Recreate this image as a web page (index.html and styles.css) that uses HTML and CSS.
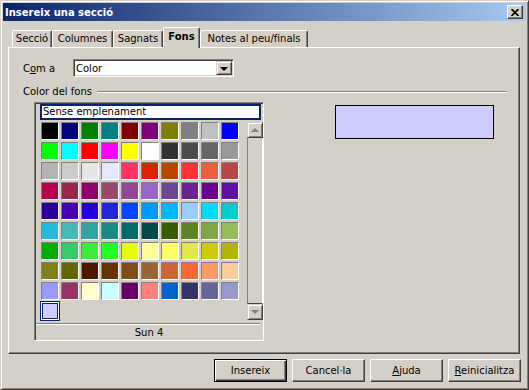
FILE: index.html
```html
<!doctype html>
<html lang="ca">
  <head>
    <meta charset="UTF-8" />
    <meta name="viewport" content="width=device-width, initial-scale=1.0" />
    <title>Insereix una secció</title>
    <link rel="stylesheet" href="styles.css">
  </head>
  <body>
    <div class="window">
        <div class="titlebar">
            <span class="title">Insereix una secció</span>
            <button type="button" class="close" aria-label="Tanca">
                <svg width="8" height="7" viewBox="0 0 8 7">
                    <path d="M0.5 0 L7.5 7 M7.5 0 L0.5 7" stroke="#000" stroke-width="1.7" fill="none" />
                </svg>
            </button>
        </div>

        <div class="dialog">
            <ul class="tabs">
                <li class="tab tab-seccio">Secció</li>
                <li class="tab tab-columnes">Columnes</li>
                <li class="tab tab-sagnats">Sagnats</li>
                <li class="tab tab-fons active">Fons</li>
                <li class="tab tab-notes">Notes al peu/finals</li>
            </ul>

            <section class="panel">
                <div class="type-row">
                    <label class="type-label" for="type">C<u>o</u>m a</label>
                    <div class="combo" id="type">
                        <span class="combo-value">Color</span>
                        <span class="combo-btn"><span class="arrow-down"></span></span>
                    </div>
                </div>

                <div class="group-title">
                    <span>Color del fons</span>
                    <span class="rule"></span>
                </div>

                <div class="group">
                    <div class="palette">
                        <div class="none-item">Sense emplenament</div>
                        <div class="palette-body">
                            <div class="swatches" id="swatches"></div>
                            <div class="scrollbar">
                                <span class="sb-btn"><span class="sb-arrow up"></span></span>
                                <span class="sb-track"></span>
                                <span class="sb-btn"><span class="sb-arrow down"></span></span>
                            </div>
                        </div>
                        <div class="palette-sep"></div>
                        <div class="palette-name">Sun 4</div>
                    </div>
                    <div class="preview"></div>
                </div>
            </section>

            <div class="buttons">
                <button type="button" class="btn default">Insereix</button>
                <button type="button" class="btn">Cancel·la</button>
                <button type="button" class="btn"><u>A</u>juda</button>
                <button type="button" class="btn"><u>R</u>einicialitza</button>
            </div>
        </div>
    </div>

    <script>
        // Sun palette, row by row (10 per row), last one is selected
        const colors = [
            '#000000', '#000080', '#008000', '#008080', '#800000', '#800080', '#808000', '#808080', '#c0c0c0', '#0000ff',
            '#00ff00', '#00ffff', '#ff0000', '#ff00ff', '#ffff00', '#ffffff', '#333333', '#4c4c4c', '#666666', '#999999',
            '#b3b3b3', '#cccccc', '#e6e6e6', '#e6e6ff', '#ff3366', '#dc2300', '#b84700', '#ff3333', '#eb613d', '#b84747',
            '#b8004d', '#99284c', '#94006b', '#994a6b', '#944794', '#9966cc', '#6b4794', '#6b2394', '#6b0094', '#5e11a6',
            '#280099', '#4700b8', '#2300dc', '#2323dc', '#0047ff', '#0099ff', '#00b8ff', '#99ccff', '#00dcff', '#00cccc',
            '#23b8dc', '#47b8b8', '#33a3a3', '#198a8a', '#006b6b', '#004a4a', '#355e00', '#5c8526', '#7da647', '#94bd5e',
            '#00ae00', '#33cc66', '#3deb3d', '#23ff23', '#e6ff00', '#ffff99', '#ffff66', '#e6e64c', '#cccc00', '#b3b300',
            '#808019', '#666600', '#4c1900', '#663300', '#804c19', '#996633', '#cc6633', '#ff6633', '#ff9966', '#ffcc99',
            '#9999ff', '#993366', '#ffffcc', '#ccffff', '#660066', '#ff8080', '#0066cc', '#333366', '#666699', '#9999cc',
            '#ccccff'
        ];

        const swatches = document.getElementById( 'swatches' );

        colors.forEach( ( color, index ) => {
            const swatch = document.createElement( 'span' );
            swatch.className = 'swatch';
            swatch.style.backgroundColor = color;

            if ( index === colors.length - 1 ) {
                swatch.classList.add( 'selected' );
            }

            swatches.append( swatch );
        } );
    </script>
  </body>
</html>
```

FILE: styles.css
```css
* {
    box-sizing: border-box;
    margin: 0;
    padding: 0;
}

body {
    background-color: #d4d0c8;
    font-family: "DejaVu Sans", Tahoma, sans-serif;
    font-size: 10px;
    color: #000;
}

button {
    font: inherit;
    color: inherit;
}

u {
    text-underline-offset: 1px;
}

.window {
    width: 529px;
    height: 390px;
    padding: 2px;
    background-color: #d4d0c8;
    border: 1px solid;
    border-color: #d4d0c8 #404040 #404040 #d4d0c8;
    box-shadow: inset 1px 1px #fff, inset -1px -1px #808080;
}

/* title bar */

.titlebar {
    height: 18px;
    display: flex;
    align-items: center;
    justify-content: space-between;
    padding: 0 3px 0 2px;
    background: linear-gradient(to right, #0a246a, #a6caf0);
}

.title {
    color: #fff;
    font-weight: bold;
    font-size: 10px;
}

.close {
    width: 16px;
    height: 14px;
    display: flex;
    align-items: center;
    justify-content: center;
    background-color: #d4d0c8;
    border: 1px solid;
    border-color: #fff #404040 #404040 #fff;
    box-shadow: inset -1px -1px #808080;
}

/* dialog body */

.dialog {
    padding: 0 6px 0 5px;
}

.tabs {
    list-style: none;
    display: flex;
    align-items: flex-end;
    height: 20px;
    margin-top: 6px;
    padding-left: 4px;
}

.tab {
    height: 17px;
    line-height: 15px;
    text-align: center;
    white-space: nowrap;
    background-color: #d4d0c8;
    border: 1px solid;
    border-bottom: none;
    border-color: #fff #404040 #404040 #fff;
    border-radius: 2px 2px 0 0;
    box-shadow: inset -1px 0 #808080;
}

.tab-seccio { width: 40px; }
.tab-columnes { width: 61px; }
.tab-sagnats { width: 50px; }
.tab-fons { width: 37px; }
.tab-notes { width: 108px; }

.tab.active {
    position: relative;
    z-index: 1;
    height: 21px;
    margin-bottom: -1px;
    line-height: 17px;
    font-weight: bold;
}

.panel {
    height: 307px;
    border: 1px solid;
    border-color: #fff #404040 #404040 #fff;
    box-shadow: inset -1px -1px #808080;
}

.type-row {
    display: flex;
    align-items: center;
    margin: 11px 0 0 14px;
}

.type-label {
    width: 50px;
}

.combo {
    width: 161px;
    height: 18px;
    display: flex;
    align-items: center;
    padding: 1px 1px 1px 2px;
    background-color: #fff;
    border: 1px solid;
    border-color: #808080 #fff #fff #808080;
    box-shadow: inset 1px 1px #404040, inset -1px -1px #d4d0c8;
}

.combo-btn {
    margin-left: auto;
    width: 16px;
    height: 14px;
    display: flex;
    align-items: center;
    justify-content: center;
    background-color: #d4d0c8;
    border: 1px solid;
    border-color: #d4d0c8 #404040 #404040 #d4d0c8;
    box-shadow: inset 1px 1px #fff, inset -1px -1px #808080;
}

.arrow-down {
    border-top: 4px solid #000;
    border-left: 4px solid transparent;
    border-right: 4px solid transparent;
    margin-top: 1px;
}

.group-title {
    display: flex;
    align-items: center;
    height: 13px;
    margin: 8px 12px 0 14px;
}

.rule {
    flex: 1;
    height: 2px;
    margin-left: 5px;
    border-top: 1px solid #808080;
    border-bottom: 1px solid #fff;
}

.group {
    display: flex;
    align-items: flex-start;
    margin: 4px 0 0 25px;
}

/* colour palette */

.palette {
    width: 230px;
    height: 239px;
    border: 1px solid;
    border-color: #808080 #fff #fff #808080;
    box-shadow: inset 1px 1px #404040, inset -1px -1px #d4d0c8;
}

.none-item {
    width: 221px;
    height: 16px;
    margin: 1px 0 0 5px;
    padding-left: 1px;
    line-height: 12px;
    background-color: #fff;
    border: 2px solid #0a246a;
}

.palette-body {
    display: flex;
    margin-top: 2px;
    padding-left: 6px;
    height: 200px;
}

.swatches {
    width: 200px;
    display: grid;
    grid-template-columns: repeat(10, 20px);
    grid-auto-rows: 20px;
}

.swatch {
    width: 18px;
    height: 18px;
    border: 1px solid;
    border-color: #808080 #fff #fff #808080;
}

.swatch.selected {
    width: 20px;
    height: 20px;
    margin: -1px 0 0 -1px;
    border: 1px solid #0a246a;
    box-shadow: inset 0 0 0 1px #fff, inset 0 0 0 2px #0a246a;
}

.scrollbar {
    width: 16px;
    height: 198px;
    margin-left: 6px;
    display: flex;
    flex-direction: column;
}

.sb-btn {
    width: 16px;
    height: 16px;
    display: flex;
    align-items: center;
    justify-content: center;
    background-color: #d4d0c8;
    border: 1px solid;
    border-color: #d4d0c8 #404040 #404040 #d4d0c8;
    box-shadow: inset 1px 1px #fff, inset -1px -1px #808080;
}

.sb-track {
    flex: 1;
    border-left: 1px solid #808080;
    border-right: 1px solid #fff;
    border-bottom: 1px solid #404040;
    background-color: #d4d0c8;
}

.sb-arrow {
    border-left: 4px solid transparent;
    border-right: 4px solid transparent;
}

.sb-arrow.up {
    border-bottom: 4px solid #808080;
}

.sb-arrow.down {
    border-top: 4px solid #808080;
}

.palette-sep {
    width: 224px;
    height: 2px;
    margin: 1px 0 0 1px;
    border-top: 1px solid #808080;
    border-bottom: 1px solid #fff;
}

.palette-name {
    height: 15px;
    line-height: 15px;
    text-align: center;
}

.preview {
    width: 159px;
    height: 34px;
    margin: 3px 0 0 71px;
    background-color: #ccccff;
    border: 1px solid #000;
}

/* bottom buttons */

.buttons {
    display: flex;
    justify-content: flex-end;
    gap: 5px;
    margin: 5px -1px 0 0;
}

.btn {
    width: 73px;
    height: 23px;
    background-color: #d4d0c8;
    border: 1px solid;
    border-color: #fff #404040 #404040 #fff;
    box-shadow: inset -1px -1px #808080;
}

.btn.default {
    border-color: #000;
    box-shadow: inset 1px 1px #fff, inset -1px -1px #404040, inset -2px -2px #808080;
}
```
